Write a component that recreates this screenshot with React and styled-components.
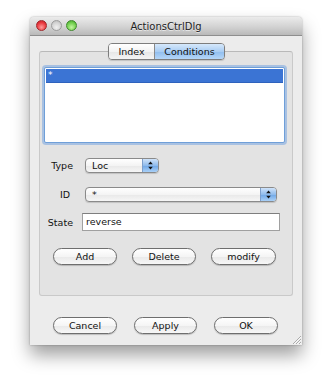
import React from 'react'
import styled, { createGlobalStyle } from 'styled-components'

const GlobalStyle = createGlobalStyle`
  html, body {
    margin: 0;
    padding: 0;
    background: #ffffff;
  }
  body {
    font-family: "DejaVu Sans", "Liberation Sans", sans-serif;
    font-size: 9.5px;
    color: #111;
  }
`

const Page = styled.div`
  width: 332px;
  height: 387px;
  padding: 17px 0 0 30px;
  box-sizing: border-box;
`

const Window = styled.div`
  position: relative;
  width: 272px;
  height: 328px;
  background: #ececec;
  border-radius: 4px 4px 0 0;
  box-shadow: 0 10px 18px rgba(0, 0, 0, 0.38), 0 0 2px rgba(0, 0, 0, 0.35);
  display: flex;
  flex-direction: column;
`

const TitleBar = styled.div`
  height: 18px;
  flex: none;
  display: flex;
  align-items: center;
  position: relative;
  border-radius: 4px 4px 0 0;
  background: linear-gradient(#ebebeb, #d2d2d2 55%, #b9b9b9);
  border-bottom: 1px solid #8e8e8e;
`

const Lights = styled.div`
  position: absolute;
  left: 6px;
  top: 3px;
  display: flex;
  gap: 4px;
`

const Light = styled.span`
  width: 11px;
  height: 11px;
  border-radius: 50%;
  box-sizing: border-box;
  border: 1px solid ${(p) => p.$edge};
  background: radial-gradient(circle at 50% 70%, ${(p) => p.$glow} 0%, ${(p) => p.$base} 60%, ${(p) => p.$dark} 100%);
`

const Title = styled.div`
  flex: 1;
  text-align: center;
  font-size: 10px;
  color: #222;
  text-shadow: 0 1px 0 rgba(255, 255, 255, 0.6);
`

const Body = styled.div`
  flex: 1;
  display: flex;
  flex-direction: column;
  padding: 7px 9px 0 9px;
`

const TabStrip = styled.div`
  display: flex;
  justify-content: center;
  position: relative;
  z-index: 2;
  padding-left: 1px;
`

const Segments = styled.div`
  display: flex;
  height: 17px;
  box-sizing: border-box;
  border: 1px solid #7d7d7d;
  border-radius: 4px;
  overflow: hidden;
  box-shadow: 0 1px 1px rgba(0, 0, 0, 0.15);
`

const Segment = styled.div`
  width: ${(p) => p.$w}px;
  display: flex;
  align-items: center;
  justify-content: center;
  color: #111;
  background: ${(p) =>
    p.$active
      ? 'linear-gradient(#d6e8fb, #a9cdf3 50%, #8fbdee 51%, #b5d6f8)'
      : 'linear-gradient(#ffffff, #f3f3f3 50%, #e6e6e6 51%, #f4f4f4)'};
  & + & {
    border-left: 1px solid #8a8a8a;
  }
`

const GroupBox = styled.div`
  margin-top: -9px;
  height: 245px;
  box-sizing: border-box;
  background: #e3e3e3;
  border: 1px solid #c9c9c9;
  border-top-color: #b9b9b9;
  border-radius: 3px;
  padding: 15px 7px 0 4px;
  display: flex;
  flex-direction: column;
`

const ListBox = styled.div`
  height: 76px;
  box-sizing: border-box;
  background: #ffffff;
  border: 1px solid #6f9fd8;
  border-radius: 2px;
  box-shadow: 0 0 0 2px rgba(120, 165, 225, 0.55);
  padding: 1px;
`

const ListRow = styled.div`
  height: 13px;
  background: ${(p) => (p.$selected ? '#3b74d4' : 'transparent')};
  color: ${(p) => (p.$selected ? '#ffffff' : '#111')};
  border-bottom: 1px solid ${(p) => (p.$selected ? '#2e62bd' : 'transparent')};
  padding-left: 2px;
  line-height: 13px;
  font-size: 9px;
`

const FormRow = styled.div`
  display: flex;
  align-items: center;
  gap: ${(p) => p.$gap}px;
  margin-top: ${(p) => p.$top}px;
`

const Label = styled.div`
  width: ${(p) => p.$w}px;
  text-align: right;
  padding-right: ${(p) => p.$pad || 0}px;
  flex: none;
  font-size: 9.5px;
`

const Popup = styled.div`
  width: ${(p) => p.$w}px;
  height: 15px;
  box-sizing: border-box;
  display: flex;
  border: 1px solid #8a8a8a;
  border-radius: 4px;
  overflow: hidden;
  background: linear-gradient(#ffffff, #f4f4f4 50%, #e8e8e8 51%, #f6f6f6);
  box-shadow: 0 1px 1px rgba(0, 0, 0, 0.15);
`

const PopupText = styled.div`
  flex: 1;
  padding-left: 6px;
  line-height: 13px;
  font-size: 9.5px;
`

const PopupArrows = styled.div`
  width: 15px;
  flex: none;
  display: flex;
  align-items: center;
  justify-content: center;
  border-left: 1px solid #7d9fcc;
  background: linear-gradient(#cfe3fa, #8fbbec 50%, #6ea6e6 51%, #a9d0f7);
`

const TextField = styled.div`
  width: 198px;
  height: 18px;
  box-sizing: border-box;
  background: #ffffff;
  border: 1px solid #a0a0a0;
  border-top-color: #7e7e7e;
  padding-left: 3px;
  line-height: 16px;
  font-size: 9.5px;
`

const ButtonRow = styled.div`
  display: flex;
  gap: ${(p) => p.$gap}px;
  margin-top: ${(p) => p.$top}px;
  padding-left: ${(p) => p.$left}px;
`

const Button = styled.div`
  width: ${(p) => p.$w || 64}px;
  height: 17px;
  box-sizing: border-box;
  border: 1px solid #6e6e6e;
  border-radius: 9px;
  background: linear-gradient(#ffffff, #f5f5f5 50%, #e9e9e9 51%, #f7f7f7);
  box-shadow: 0 1px 1px rgba(0, 0, 0, 0.2);
  display: flex;
  align-items: center;
  justify-content: center;
  font-size: 9.5px;
  color: #111;
`

const Grip = styled.svg`
  position: absolute;
  right: 1px;
  bottom: 1px;
`

function Arrows() {
  return (
    <svg width="5" height="9" viewBox="0 0 5 9">
      <path d="M2.5 0.5 L4.8 3.3 L0.2 3.3 Z" fill="#111" />
      <path d="M2.5 8.5 L4.8 5.7 L0.2 5.7 Z" fill="#111" />
    </svg>
  )
}

export default function App() {
  return (
    <Page>
      <GlobalStyle />
      <Window>
        <TitleBar>
          <Lights>
            <Light $edge="#a0262a" $base="#e9363c" $dark="#b8232a" $glow="#ff9a9a" />
            <Light $edge="#9c9c9c" $base="#d2d2d2" $dark="#b4b4b4" $glow="#f0f0f0" />
            <Light $edge="#3f8a2d" $base="#6fce4b" $dark="#3e9a27" $glow="#c4f5a2" />
          </Lights>
          <Title>ActionsCtrlDlg</Title>
        </TitleBar>
        <Body>
          <TabStrip>
            <Segments>
              <Segment $w={45}>Index</Segment>
              <Segment $w={69} $active>
                Conditions
              </Segment>
            </Segments>
          </TabStrip>
          <GroupBox>
            <ListBox>
              <ListRow $selected>*</ListRow>
            </ListBox>
            <FormRow $top={15} $gap={12}>
              <Label $w={29}>Type</Label>
              <Popup $w={74}>
                <PopupText>Loc</PopupText>
                <PopupArrows>
                  <Arrows />
                </PopupArrows>
              </Popup>
            </FormRow>
            <FormRow $top={14} $gap={12}>
              <Label $w={26} $pad={3}>
                ID
              </Label>
              <Popup $w={192}>
                <PopupText>*</PopupText>
                <PopupArrows>
                  <Arrows />
                </PopupArrows>
              </Popup>
            </FormRow>
            <FormRow $top={11} $gap={9}>
              <Label $w={29}>State</Label>
              <TextField>reverse</TextField>
            </FormRow>
            <ButtonRow $gap={15} $top={17} $left={9}>
              <Button>Add</Button>
              <Button>Delete</Button>
              <Button $w={65}>modify</Button>
            </ButtonRow>
          </GroupBox>
          <ButtonRow $gap={17} $top={21} $left={14}>
            <Button>Cancel</Button>
            <Button $w={63}>Apply</Button>
            <Button $w={64}>OK</Button>
          </ButtonRow>
        </Body>
        <Grip width="10" height="10" viewBox="0 0 10 10">
          <path d="M2 10 L10 2 M5 10 L10 5 M8 10 L10 8" stroke="#9a9a9a" strokeWidth="0.8" />
          <path d="M3 10 L10 3 M6 10 L10 6 M9 10 L10 9" stroke="#ffffff" strokeWidth="0.6" />
        </Grip>
      </Window>
    </Page>
  )
}
